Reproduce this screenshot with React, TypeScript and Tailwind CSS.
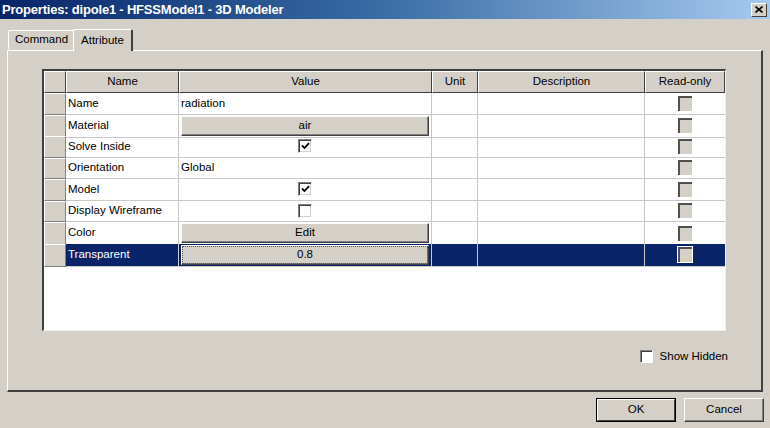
import React from "react";

const FONT = { fontFamily: '"Liberation Sans", Arial, sans-serif' };

function Check({ checked }: { checked: boolean }) {
  return (
    <div className="w-[14px] h-[14px] bg-white border-t border-l border-t-[#808080] border-l-[#808080] border-r border-b border-r-white border-b-white shadow-[inset_1px_1px_0_#404040,inset_-1px_-1px_0_#d4d0c8] flex items-center justify-center">
      {checked && (
        <svg width="9" height="8" viewBox="0 0 9 8">
          <path d="M1 3.5 L3.5 6 L8 1.2" stroke="#000" strokeWidth="1.8" fill="none" />
        </svg>
      )}
    </div>
  );
}

function RO({ sel }: { sel?: boolean }) {
  return (
    <div
      className={
        "w-[14px] h-[15px] bg-[#d4d0c8] border-t-2 border-l-2 border-t-[#505050] border-l-[#505050] " +
        (sel ? "outline outline-1 outline-white" : "")
      }
    />
  );
}

function Btn({ label, focus }: { label: string; focus?: boolean }) {
  return (
    <div className="mx-[2px] my-[1px] flex-1 h-[20px] bg-[#d4d0c8] border-t border-l border-t-white border-l-white border-r border-b border-r-[#404040] border-b-[#404040] shadow-[inset_-1px_-1px_0_#808080] flex items-center justify-center">
      <div
        className={
          "w-full h-full flex items-center justify-center text-black " +
          (focus ? "border border-dotted border-[#555]" : "")
        }
      >
        {label}
      </div>
    </div>
  );
}

type Row = {
  name: string;
  value: React.ReactNode;
  sel?: boolean;
};

const rows: Row[] = [
  { name: "Name", value: <span className="pl-[2px]">radiation</span> },
  { name: "Material", value: <Btn label="air" /> },
  { name: "Solve Inside", value: <div className="flex-1 flex justify-center"><Check checked /></div> },
  { name: "Orientation", value: <span className="pl-[2px]">Global</span> },
  { name: "Model", value: <div className="flex-1 flex justify-center"><Check checked /></div> },
  { name: "Display Wireframe", value: <div className="flex-1 flex justify-center"><Check checked={false} /></div> },
  { name: "Color", value: <Btn label="Edit" /> },
  { name: "Transparent", value: <Btn label="0.8" focus />, sel: true },
];

const cols = "grid grid-cols-[22px_113px_253px_46px_167px_80px]";

export default function App() {
  return (
    <div className="w-[770px] h-[428px] bg-[#d4d0c8] flex flex-col text-[11.5px] text-black overflow-hidden" style={FONT}>
      {/* title bar */}
      <div className="h-[19px] bg-gradient-to-r from-[#0a246a] via-[#3a6ea5] to-[#a6caf0] flex items-center justify-between pl-[2px] pr-[3px]">
        <span className="text-white font-bold text-[13px] tracking-[-0.2px]">Properties: dipole1 - HFSSModel1 - 3D Modeler</span>
        <div className="w-[16px] h-[14px] bg-[#d4d0c8] border-t border-l border-t-white border-l-white border-r border-b border-r-[#404040] border-b-[#404040] flex items-center justify-center">
          <svg width="8" height="7" viewBox="0 0 8 7">
            <path d="M0.5 0.5 L7.5 6.5 M7.5 0.5 L0.5 6.5" stroke="#000" strokeWidth="1.6" />
          </svg>
        </div>
      </div>

      {/* tabs */}
      <div className="flex items-end pl-[8px] h-[31px]">
        <div className="h-[19px] px-[6px] border-t border-l border-t-white border-l-white border-r border-r-[#808080] rounded-t-[2px] flex items-center mb-[1px]">
          Command
        </div>
        <div className="relative h-[22px] px-[7px] -ml-[2px] bg-[#d4d0c8] border-t border-l border-t-white border-l-white border-r-2 border-r-[#404040] rounded-t-[2px] flex items-center z-10 -mb-[1px]">
          Attribute
        </div>
      </div>

      {/* panel */}
      <div className="ml-[7px] w-[756px] h-[342px] border-t border-l border-t-white border-l-white border-r-2 border-b-2 border-r-[#404040] border-b-[#404040] flex flex-col">
        <div className="ml-[34px] mt-[18px] w-[684px] h-[262px] bg-white border-t-2 border-l-2 border-t-[#404040] border-l-[#404040] border-r border-b border-r-[#f0f0f0] border-b-[#f0f0f0] overflow-hidden">
          {/* header */}
          <div className={cols + " h-[22px]"}>
            {["", "Name", "Value", "Unit", "Description", "Read-only"].map((h, i) => (
              <div
                key={i}
                className="bg-[#d4d0c8] border-t border-l border-t-white border-l-white border-r border-b border-r-[#404040] border-b-[#404040] flex items-center justify-center"
              >
                {h}
              </div>
            ))}
          </div>
          {rows.map((r, i) => (
            <div key={i} className={cols + " h-[21.5px]"}>
              <div className="bg-[#d4d0c8] border-t border-l border-t-white border-l-white border-r border-b border-r-[#808080] border-b-[#808080]" />
              <div className={"flex items-center pl-[2px] border-r border-b border-[#c8c8c8] " + (r.sel ? "bg-[#0a246a] text-white" : "")}>
                {r.name}
              </div>
              <div className={"flex items-center border-r border-b border-[#c8c8c8] " + (r.sel ? "bg-[#0a246a]" : "")}>
                {r.value}
              </div>
              <div className={"border-r border-b border-[#c8c8c8] " + (r.sel ? "bg-[#0a246a]" : "")} />
              <div className={"border-r border-b border-[#c8c8c8] " + (r.sel ? "bg-[#0a246a]" : "")} />
              <div className={"flex items-center justify-center border-b border-[#c8c8c8] " + (r.sel ? "bg-[#0a246a]" : "")}>
                <RO sel={r.sel} />
              </div>
            </div>
          ))}
        </div>

        <div className="flex items-center justify-end mt-[17px] mr-[33px] gap-[7px]">
          <div className="w-[13px] h-[13px] bg-white border-t border-l border-t-[#808080] border-l-[#808080] border-r border-b border-r-white border-b-white shadow-[inset_1px_1px_0_#404040]" />
          <span>Show Hidden</span>
        </div>
      </div>

      {/* buttons */}
      <div className="flex justify-end gap-[8px] mt-[6px] mr-[6px]">
        <div className="w-[80px] h-[24px] border border-black flex">
          <div className="flex-1 bg-[#d4d0c8] border-t border-l border-t-white border-l-white border-r border-b border-r-[#404040] border-b-[#404040] flex items-center justify-center">
            OK
          </div>
        </div>
        <div className="w-[80px] h-[24px] bg-[#d4d0c8] border-t border-l border-t-white border-l-white border-r border-b border-r-[#404040] border-b-[#404040] shadow-[inset_-1px_-1px_0_#808080] flex items-center justify-center">
          Cancel
        </div>
      </div>
    </div>
  );
}
